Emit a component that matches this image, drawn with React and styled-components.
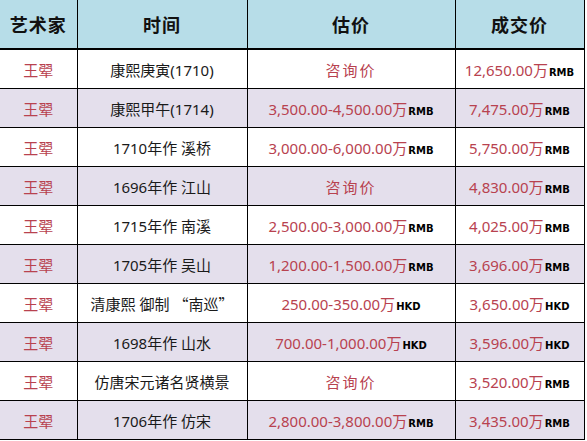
import styled, { createGlobalStyle } from "styled-components";

const GlobalStyle = createGlobalStyle`
  html, body {
    margin: 0;
    padding: 0;
    background: #fff;
  }
  body {
    font-family: "Noto Sans", "Noto Sans CJK SC", sans-serif;
  }
`;

const Table = styled.table`
  border-collapse: collapse;
  table-layout: fixed;
  width: 584px;
`;

const HeadCell = styled.th`
  height: 48px;
  padding: 0;
  background: #b7dde8;
  border-right: 1px solid #000;
  border-bottom: 2px solid #000;
  font-family: "Noto Sans CJK SC", sans-serif;
  font-size: 18px;
  font-weight: 700;
  letter-spacing: 1px;
  color: #111;
  text-align: center;
`;

const Row = styled.tr`
  background: ${(p) => (p.$alt ? "#e4dfec" : "#ffffff")};
`;

const Cell = styled.td`
  height: 38px;
  padding: 0;
  border-right: 1px solid #000;
  border-bottom: 1px solid #000;
  text-align: center;
  white-space: nowrap;
  font-family: "Noto Sans", "Noto Sans CJK SC", sans-serif;
  font-size: 15px;
  color: ${(p) => (p.$red ? "#b8424f" : "#1a1a1a")};
`;

const Quote = styled.span`
  font-family: "Noto Sans CJK SC", sans-serif;
`;

const Ask = styled.span`
  font-family: "Noto Sans CJK SC", sans-serif;
  letter-spacing: 2px;
  color: #b8424f;
`;

const Unit = styled.span`
  font-family: "DejaVu Sans", "Liberation Sans", sans-serif;
  font-size: 10px;
  font-weight: 700;
  color: #000;
  margin-left: 1px;
`;

const rows = [
  ["康熙庚寅(1710)", null, "12,650.00", "RMB", "RMB"],
  ["康熙甲午(1714)", "3,500.00-4,500.00", "7,475.00", "RMB", "RMB"],
  ["1710年作 溪桥", "3,000.00-6,000.00", "5,750.00", "RMB", "RMB"],
  ["1696年作 江山", null, "4,830.00", "RMB", "RMB"],
  ["1715年作 南溪", "2,500.00-3,000.00", "4,025.00", "RMB", "RMB"],
  ["1705年作 吴山", "1,200.00-1,500.00", "3,696.00", "RMB", "RMB"],
  [<>清康熙 御制 <Quote>“南巡”</Quote></>, "250.00-350.00", "3,650.00", "HKD", "HKD"],
  ["1698年作 山水", "700.00-1,000.00", "3,596.00", "HKD", "HKD"],
  ["仿唐宋元诸名贤横景", null, "3,520.00", "RMB", "RMB"],
  ["1706年作 仿宋", "2,800.00-3,800.00", "3,435.00", "RMB", "RMB"],
];

function Price({ value, unit }) {
  return (
    <>
      {value}万<Unit>{unit}</Unit>
    </>
  );
}

export default function App() {
  return (
    <>
      <GlobalStyle />
      <Table>
        <colgroup>
          <col style={{ width: 77 }} />
          <col style={{ width: 170 }} />
          <col style={{ width: 208 }} />
          <col style={{ width: 129 }} />
        </colgroup>
        <thead>
          <tr>
            <HeadCell>艺术家</HeadCell>
            <HeadCell>时间</HeadCell>
            <HeadCell>估价</HeadCell>
            <HeadCell>成交价</HeadCell>
          </tr>
        </thead>
        <tbody>
          {rows.map(([time, est, deal, estUnit, dealUnit], i) => (
            <Row key={i} $alt={i % 2 === 1}>
              <Cell $red>王翚</Cell>
              <Cell>{time}</Cell>
              <Cell $red>
                {est ? <Price value={est} unit={estUnit} /> : <Ask>咨询价</Ask>}
              </Cell>
              <Cell $red>
                <Price value={deal} unit={dealUnit} />
              </Cell>
            </Row>
          ))}
        </tbody>
      </Table>
    </>
  );
}
